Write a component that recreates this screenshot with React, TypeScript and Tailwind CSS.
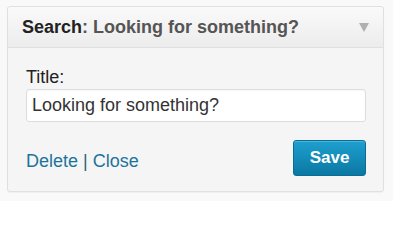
export default function App() {
  return (
    <div
      className="w-[393px] h-[201px] bg-[#f9f9f9] pt-[6px] pl-[7px]"
      style={{ fontFamily: '"Liberation Sans", Arial, sans-serif' }}
    >
      {/* Widget panel */}
      <div className="w-[377px] rounded-[3px] border border-[#e0e0e0] bg-[#f5f5f5] shadow-[0_1px_1px_rgba(0,0,0,0.04)]">
        {/* Header */}
        <div className="flex h-[41px] items-center justify-between rounded-t-[3px] border-b border-[#dfdfdf] bg-gradient-to-b from-[#fafafa] to-[#ececec] pl-[14px] pr-[14px]">
          <h3 className="text-[18px] leading-[22px] font-bold text-[#222]">
            Search<span className="text-[#555]">: Looking for something?</span>
          </h3>
          <svg width="10" height="9" viewBox="0 0 10 9" className="mt-[1px]">
            <polygon points="0,0 10,0 5,9" fill="#b0b0b0" />
          </svg>
        </div>

        {/* Body */}
        <div className="pt-[18px] pb-[15px] pl-[18px] pr-[17px]">
          <label className="block text-[18px] leading-[22px] text-[#222] mb-[1px]">Title:</label>
          <input
            type="text"
            defaultValue="Looking for something?"
            className="block h-[33px] w-full rounded-[3px] border border-[#dddddd] bg-white px-[5px] text-[18px] text-[#333] outline-none shadow-[inset_0_1px_2px_rgba(0,0,0,0.04)]"
            style={{ fontFamily: '"Liberation Sans", Arial, sans-serif' }}
          />

          <div className="mt-[18px] flex items-center justify-between">
            <div className="pt-[6px] text-[18px] leading-[22px] text-[#1e739c]">
              <a href="#" className="text-[#1e739c]">Delete</a>
              <span className="text-[#2a5f78]"> | </span>
              <a href="#" className="text-[#1e739c]">Close</a>
            </div>
            <button className="h-[36px] w-[73px] rounded-[3px] border border-[#0a6d93] bg-gradient-to-b from-[#1ea0d0] to-[#0a78a2] text-[17px] font-bold text-white shadow-[inset_0_1px_0_rgba(120,200,230,0.5)]">
              Save
            </button>
          </div>
        </div>
      </div>
    </div>
  );
}
